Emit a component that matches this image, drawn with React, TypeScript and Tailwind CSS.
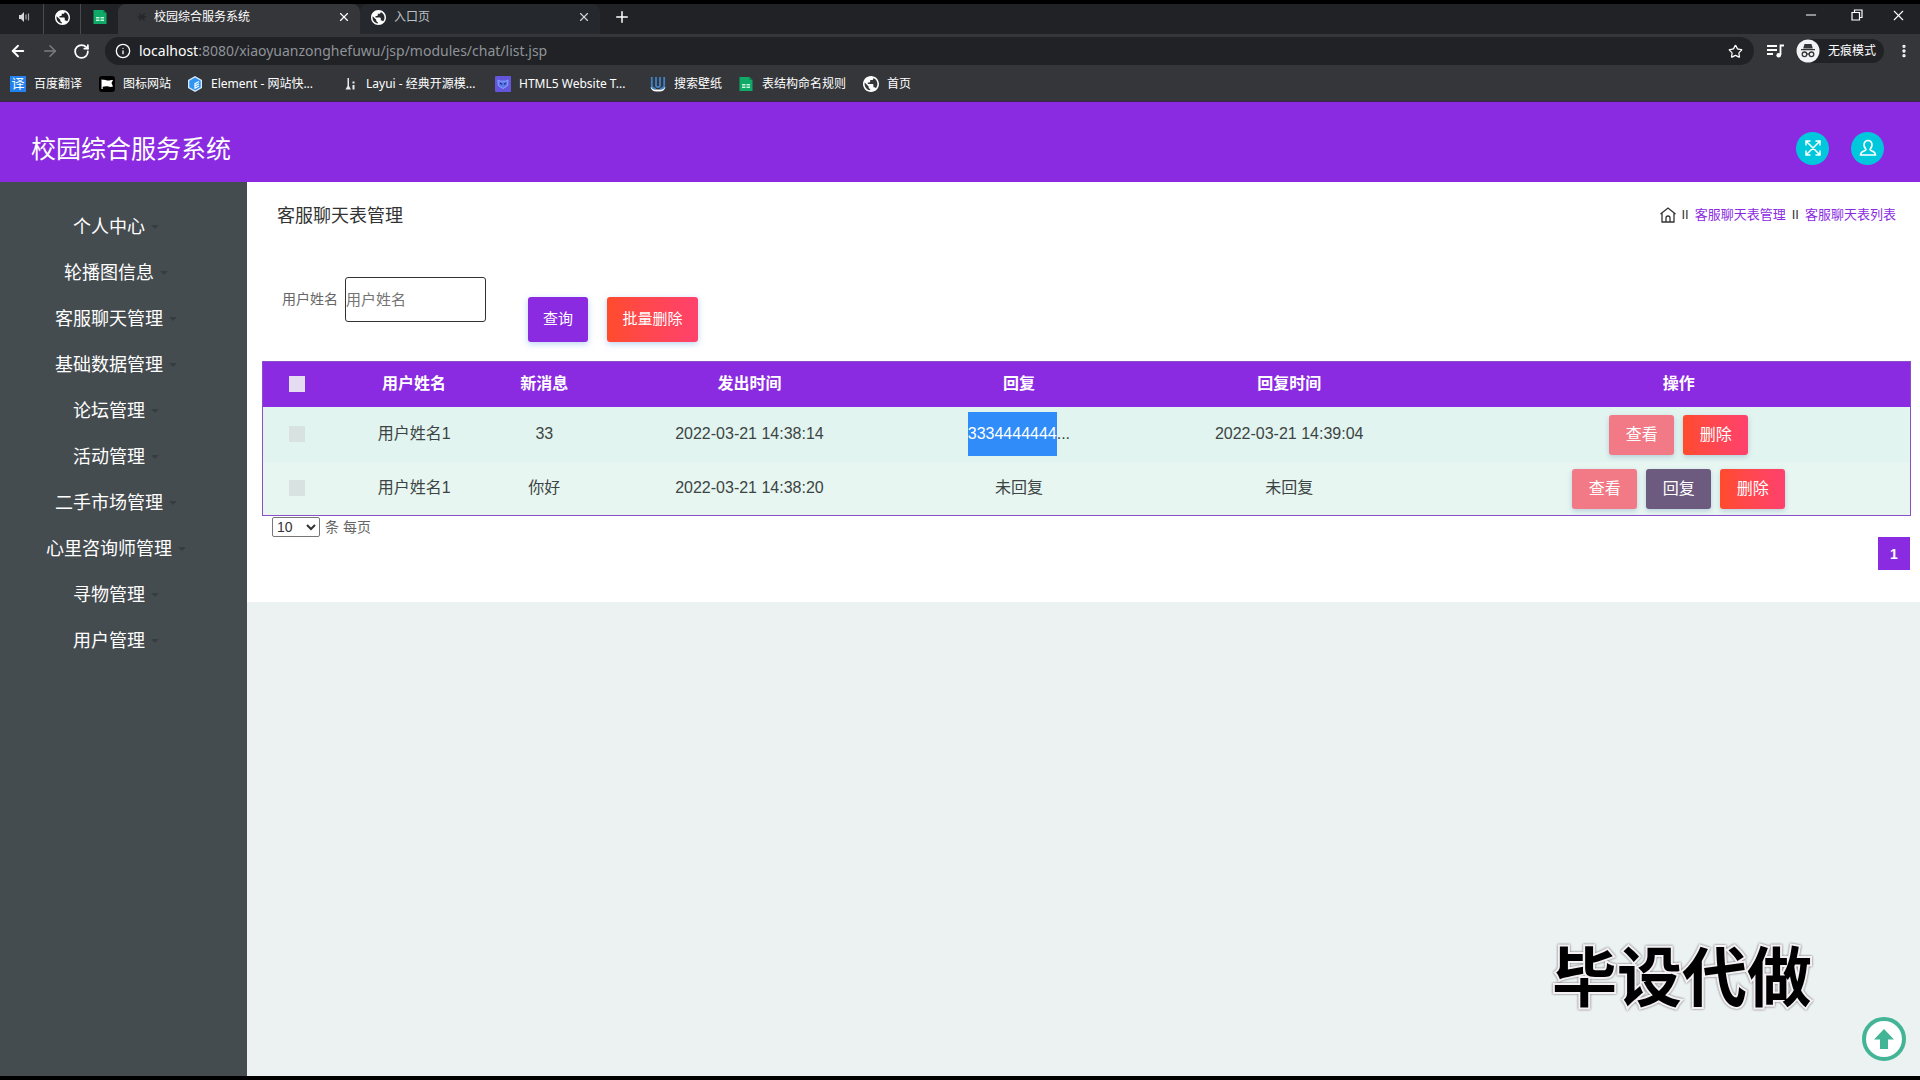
import React from "react";
import { ArrowLeft, ArrowRight, RotateCw, Info, Star, X, Plus, Minus, MoreVertical } from "lucide-react";

function Globe({ className }: { className: string }) {
  return (
    <svg viewBox="2 2 20 20" className={className} aria-hidden="true">
      <path fill="#fff" d="M12 2C6.48 2 2 6.48 2 12s4.48 10 10 10 10-4.48 10-10S17.52 2 12 2zm-1 17.93c-3.95-.49-7-3.85-7-7.93 0-.62.08-1.21.21-1.79L9 15v1c0 1.1.9 2 2 2v1.93zm6.9-2.54c-.26-.81-1-1.39-1.900-1.39h-1v-3c0-.55-.45-1-1-1H8v-2h2c.55 0 1-.45 1-1V7h2c1.100 0 2-.9 2-2v-.41c2.930 1.190 5 4.060 5 7.410 0 2.080-.8 3.970-2.100 5.390z" />
    </svg>
  );
}

function Sheet({ className }: { className: string }) {
  return (
    <svg viewBox="0 0 16 16" className={className} aria-hidden="true">
      <path d="M1.500 1h10l3 3v11h-13z" fill="#0fa968" />
      <path d="M11.500 1l3 3h-3z" fill="#0a7d4c" />
      <path d="M4 8h3.500v1.500H4zM8.500 8H12v1.500H8.500zM4 10.500h3.500V12H4zM8.500 10.500H12V12H8.500z" fill="#c9f5df" />
    </svg>
  );
}

const bookmarkIcon = "size-4 shrink-0";
const bookmarks: { name: string; icon: React.ReactNode; width: string }[] = [
  {
    name: "百度翻译",
    width: "w-[89px]",
    icon: (
      <span className="flex size-4 shrink-0 items-center justify-center bg-[#2382f0] text-[13px] leading-none text-white">译</span>
    ),
  },
  {
    name: "图标网站",
    width: "w-[88px]",
    icon: (
      <svg viewBox="0 0 16 16" className={bookmarkIcon} aria-hidden="true">
        <rect width="16" height="16" rx="3" fill="#000" />
        <path d="M2.500 3.500h1.200V4c2-1 4 .8 6 .5 1.200-.1 2-.5 4.300-.5l-1.500 3L14 10.500c-2 .5-3 .5-4.500 0-2-.5-3.500-.5-5.800.3V13H2.500z" fill="#fff" />
      </svg>
    ),
  },
  {
    name: "Element - 网站快...",
    width: "w-[155px]",
    icon: (
      <svg viewBox="0 0 16 16" className={bookmarkIcon} aria-hidden="true">
        <path d="M8 0l7 4v8l-7 4-7-4V4z" fill="#d9ecff" />
        <path d="M8 1.500l5.700 3.200v6.600L8 14.500l-5.700-3.200V4.700z" fill="#2f95f5" />
        <path d="M12 5.500L8 7.700v4.500l4-2.200M8 10l4-2.200" fill="none" stroke="#fff" strokeWidth="1.200" />
      </svg>
    ),
  },
  {
    name: "Layui - 经典开源模...",
    width: "w-[153px]",
    icon: (
      <svg viewBox="0 0 16 16" className={bookmarkIcon} aria-hidden="true">
        <path d="M5.500 2h1.500v8l2 3.500H3.500L5.500 10zM10.500 5.500h2v2h-2zM10.500 9h2v4.500h-2z" fill="#e8eaed" />
      </svg>
    ),
  },
  {
    name: "HTML5 Website T...",
    width: "w-[155px]",
    icon: (
      <svg viewBox="0 0 16 16" className={bookmarkIcon} aria-hidden="true">
        <rect width="16" height="16" rx="1" fill="#6456dc" />
        <path d="M3 4l2.500 1.200h5L13 4l-.3 5.500L8 12.500 3.300 9.500z" fill="#5a7be8" stroke="#86a4ff" />
        <path d="M5 7l2 1.500M11 7L9 8.500" stroke="#2d2a90" strokeWidth="1.300" />
      </svg>
    ),
  },
  {
    name: "搜索壁纸",
    width: "w-[88px]",
    icon: (
      <svg viewBox="0 0 16 16" className={bookmarkIcon} aria-hidden="true">
        <path d="M1.500 11q1 3.500 5 3.500h3q4 0 5-3.500" fill="none" stroke="#fff" strokeWidth="2" />
        <path d="M1.800 1v9q.5 2.500 4 2.800M6 1v8.500q0 1.500 2 1.500t2-1.500V1M14.200 1v9q-.5 2.500-4 2.800" fill="none" stroke="#3f82c8" strokeWidth="1.800" />
      </svg>
    ),
  },
  { name: "表结构命名规则", width: "w-[125px]", icon: <Sheet className={bookmarkIcon} /> },
  { name: "首页", width: "w-[60px]", icon: <Globe className={bookmarkIcon} /> },
];

const windowButton = "flex w-[46px] items-center justify-center";

function Browser() {
  return (
    <header className="bg-[#35363a] text-xs text-white">
      <div className="h-1 bg-black" />
      <div className="flex h-[30px] bg-[#202226]">
        <div className="flex w-[43px] items-center justify-center pb-1 pl-1">
          <svg viewBox="0 0 14 14" className="size-3.5" aria-hidden="true">
            <path d="M2 5h2l3-3v10L4 9H2z" fill="#d5d7da" />
            <path d="M9 4.500v5M11.500 3.500v7" stroke="#a5a8ab" strokeWidth="1.200" />
          </svg>
        </div>
        <div className="flex w-[38px] items-center justify-center border-x border-[#4a4b4f] pb-1">
          <Globe className="size-[15px]" />
        </div>
        <div className="flex w-[37px] items-center justify-center pb-1">
          <Sheet className="size-4" />
        </div>
        <div className="flex w-[242px] items-center rounded-t-lg bg-[#35363a] pb-1 pl-[17px] pr-[9px]">
          <svg viewBox="0 0 16 16" className="mr-[5px] size-3.5" aria-hidden="true">
            <path d="M5 4l6 8M11 4l-6 8M3 8h10" stroke="#26272a" strokeWidth="1.500" />
          </svg>
          <span className="flex-1">校园综合服务系统</span>
          <button aria-label="关闭标签页"><X className="size-3.5" /></button>
        </div>
        <div className="flex w-[240px] items-center rounded-t-lg bg-[#25282c] pb-1 pl-[11px] pr-[9px]">
          <Globe className="mr-2 size-[15px]" />
          <span className="flex-1 text-[#bdc1c6]">入口页</span>
          <button aria-label="关闭标签页"><X className="size-3.5 text-[#d0d3d6]" /></button>
        </div>
        <button className="ml-[13px] pb-1" aria-label="新标签页"><Plus className="size-[18px]" /></button>
        <div className="ml-auto flex pb-2">
          <button className={windowButton} aria-label="最小化"><Minus strokeWidth={1.5} className="size-4" /></button>
          <button className={windowButton} aria-label="还原">
            <svg viewBox="0 0 12 12" className="size-3" fill="none" stroke="#fff" strokeWidth="1.200" aria-hidden="true">
              <path d="M1 3.500h7.500V11H1zM3.500 3.500V1H11v7.500H8.500" />
            </svg>
          </button>
          <button className="flex w-10 items-center justify-center pr-1" aria-label="关闭"><X strokeWidth={1.5} className="size-[17px]" /></button>
        </div>
      </div>
      <div className="flex h-[34px] items-center pl-[9px] pr-2">
        <button aria-label="后退"><ArrowLeft className="size-[18px]" strokeWidth={2.5} /></button>
        <button className="ml-[14px]" aria-label="前进"><ArrowRight className="size-[18px] text-[#7b7d80]" /></button>
        <button className="ml-[14px]" aria-label="刷新"><RotateCw className="size-[17px]" strokeWidth={2.5} /></button>
        <div className="ml-[15px] flex h-7 flex-1 items-center rounded-full bg-[#202226] pl-2.5 pr-[11px]">
          <Info className="mr-2 size-4" />
          <div role="textbox" aria-label="地址" className="flex-1 font-['Noto_Sans',sans-serif] text-sm text-[#8f9398]">
            <span className="text-white">localhost</span>:8080/xiaoyuanzonghefuwu/jsp/modules/chat/list.jsp
          </div>
          <button aria-label="收藏"><Star className="size-[15px]" /></button>
        </div>
        <button className="ml-3" aria-label="媒体控制">
          <svg viewBox="0 0 18 14" className="h-[14px] w-[18px]" aria-hidden="true">
            <path d="M1 2h10M1 6h10M1 10h6M14.500 11V1.500H18" fill="none" stroke="#fff" strokeWidth="1.800" />
            <circle cx="12.700" cy="11.200" r="2.300" fill="#fff" />
          </svg>
        </button>
        <div className="ml-3 flex h-6 items-center gap-2 rounded-full bg-[#202226] pr-2">
          <svg viewBox="0 0 24 24" className="size-6" aria-hidden="true">
            <circle cx="12" cy="12" r="11.500" fill="#f1f3f4" />
            <path d="M8.500 5h7l1.300 4.500H7.200zM5 10h14v1.300H5z" fill="#35363a" />
            <g fill="none" stroke="#35363a" strokeWidth="1.300"><circle cx="8.500" cy="15.300" r="2.300" /><circle cx="15.500" cy="15.300" r="2.300" /><path d="M10.800 15h2.400" /></g>
          </svg>
          <span>无痕模式</span>
        </div>
        <button className="ml-3" aria-label="菜单"><MoreVertical className="size-4" strokeWidth={3} /></button>
      </div>
      <nav className="flex h-[34px] items-center border-b border-[#3c2350] pb-0.5 pl-[10px]">
        {bookmarks.map((b) => (
          <a key={b.name} href="#" className={"flex items-center gap-2 whitespace-nowrap " + b.width}>
            {b.icon}
            {b.name}
          </a>
        ))}
      </nav>
    </header>
  );
}

const menu = ["个人中心", "轮播图信息", "客服聊天管理", "基础数据管理", "论坛管理", "活动管理", "二手市场管理", "心里咨询师管理", "寻物管理", "用户管理"];

const rows = [
  { id: 1, name: "用户姓名1", msg: "33", sent: "2022-03-21 14:38:14", reply: "3334444444", replied: "2022-03-21 14:39:04", open: false },
  { id: 2, name: "用户姓名1", msg: "你好", sent: "2022-03-21 14:38:20", reply: "", replied: "未回复", open: true },
];

const action = "h-10 w-[65px] rounded-[3px] text-base text-white shadow-[0_2px_5px_rgba(120,150,190,0.4)]";
const red = "bg-linear-to-r from-[#ff4b2b] to-[#ff416c]";
const box = "block mx-auto size-4 appearance-none";

export default function App() {
  return (
    <div className="flex min-h-screen flex-col bg-[#ebf2f1] font-['Liberation_Sans','Noto_Sans_CJK_SC',sans-serif]">
      <div className="font-['Noto_Sans','Noto_Sans_CJK_SC',sans-serif]"><Browser /></div>
      <div className="flex h-20 items-center justify-between bg-[#8a2be2] pl-[31px] pr-9 pt-3">
        <h1 className="pt-1 text-[25px] text-white">校园综合服务系统</h1>
        <div className="flex gap-[22px]">
          <button className="flex size-[33px] items-center justify-center rounded-full bg-[#00c8dc]" aria-label="全屏">
            <svg viewBox="0 0 16 16" className="size-4" fill="none" stroke="#fff" strokeWidth="1.500" aria-hidden="true">
              <path d="M1 5.500V1h4.500M10.500 1H15v4.500M15 10.500V15h-4.500M5.500 15H1v-4.500M1.500 1.500l13 13M14.500 1.500l-13 13" />
            </svg>
          </button>
          <button className="flex size-[33px] items-center justify-center rounded-full bg-[#00c8dc]" aria-label="用户">
            <svg viewBox="0 0 18 18" className="size-[18px]" fill="none" stroke="#fff" strokeWidth="1.600" aria-hidden="true">
              <path d="M7 10.500C3.500 6.500 5 1.500 9 1.500s5.500 5 2 9c0 2 5.500 1 5.500 5.500h-15C1.500 11.500 7 12.500 7 10.500z" />
            </svg>
          </button>
        </div>
      </div>
      <div className="flex flex-1">
        <nav className="w-[247px] shrink-0 bg-[#454c50] pr-[15px] pt-[22px]">
          {menu.map((m) => (
            <a key={m} href="#" className="flex h-[46px] items-center justify-center text-lg text-white">
              {m}
              <span className="ml-1.5 h-0 w-2 border-x-4 border-t-4 border-x-transparent border-t-[#363d41]" />
            </a>
          ))}
        </nav>
        <main className="min-w-0 flex-1">
          <section className="h-[420px] bg-white pl-[15px] pr-[9px]">
            <div className="flex h-[68px] items-center justify-between px-[15px]">
              <h2 className="text-lg text-[#333]">客服聊天表管理</h2>
              <div className="flex items-center gap-1.5 pb-0.5 text-[13px] text-[#333]">
                <svg viewBox="0 0 16 16" className="size-4" fill="none" stroke="#333" strokeWidth="1.300" aria-hidden="true">
                  <path d="M.5 7L8 1l7.500 6M2 6v9h12V6M6 15v-4a2 2 0 0 1 4 0v4" />
                </svg>
                <span>II</span>
                <a href="#" className="text-[#8a2be2]">客服聊天表管理</a>
                <span>II</span>
                <a href="#" className="text-[#8a2be2]">客服聊天表列表</a>
              </div>
            </div>
            <form className="flex h-[111px] items-start pl-5 pt-[27px]" onSubmit={(e) => e.preventDefault()}>
              <label htmlFor="username" className="mr-[7px] text-sm leading-[44px] text-[#666]">用户姓名</label>
              <input id="username" placeholder="用户姓名" className="h-[45px] w-[141px] rounded-[3px] border border-[#333] text-[15px] placeholder:text-[#757575]" />
              <button className="ml-[42px] mt-5 h-[45px] w-[60px] rounded-[3px] bg-[#8a2be2] text-[15px] text-white shadow-[0_2px_6px_rgba(120,170,230,0.5)]">查询</button>
              <button type="button" className={"ml-[19px] mt-5 h-[45px] w-[91px] rounded-[3px] text-[15px] text-white shadow-[0_2px_6px_rgba(120,170,230,0.5)] " + red}>批量删除</button>
            </form>
            <table className="w-full table-fixed border-collapse border border-[#8a4fc8] text-center text-base text-[#3c4444]">
              <colgroup>
                <col className="w-[4.2%]" /><col className="w-[10%]" /><col className="w-[5.8%]" /><col className="w-[19.1%]" /><col className="w-[13.6%]" /><col className="w-[19.2%]" /><col className="w-[28.1%]" />
              </colgroup>
              <thead className="bg-[#8a2be2] text-white">
                <tr className="h-[45px]">
                  <th><input type="checkbox" aria-label="全选" className={box + " bg-[#e4dcf0]"} /></th>
                  <th>用户姓名</th><th>新消息</th><th>发出时间</th><th>回复</th><th>回复时间</th><th>操作</th>
                </tr>
              </thead>
              <tbody>
                {rows.map((r) => (
                  <tr key={r.id} className={r.open ? "h-[54px] bg-[#e7f6f1]" : "h-[55px] bg-[#e2f4ef]"}>
                    <td><input type="checkbox" aria-label="选择" className={box + " bg-[#d8e2e0]"} /></td>
                    <td>{r.name}</td>
                    <td>{r.msg}</td>
                    <td>{r.sent}</td>
                    <td>
                      {r.reply ? (
                        <><span className="inline-block bg-[#2f8cf8] leading-[44px] text-white">{r.reply}</span>...</>
                      ) : "未回复"}
                    </td>
                    <td>{r.replied}</td>
                    <td>
                      <div className="flex justify-center gap-[9px] pt-0.5">
                        <button className={action + " bg-[#f27a86]"}>查看</button>
                        {r.open && <button className={action + " bg-[#6c5b7f]"}>回复</button>}
                        <button className={action + " " + red}>删除</button>
                      </div>
                    </td>
                  </tr>
                ))}
              </tbody>
            </table>
            <div className="flex h-[21px] items-center gap-[5px] pl-[10px] text-sm text-[#666]">
              <select aria-label="每页条数" className="h-5 w-12 rounded-[2px] border border-[#767676] bg-white text-sm text-[#333]">
                <option>10</option>
              </select>
              <span>条 每页</span>
            </div>
            <div className="flex justify-end pr-px">
              <button className="h-[33px] w-8 bg-[#8a2be2] text-sm font-bold text-white">1</button>
            </div>
          </section>
        </main>
      </div>
      <div className="h-1 bg-black" />
      <div className="pointer-events-none fixed bottom-[59px] right-[108px] font-['Noto_Sans_CJK_SC',sans-serif] text-[65px] leading-[96px] font-bold text-black [paint-order:stroke] [-webkit-text-stroke:4px_#f4f0f4] drop-shadow-[0_0_1px_#666]">毕设代做</div>
      <button aria-label="返回顶部" className="fixed bottom-[19px] right-3.5 flex size-[44px] items-center justify-center rounded-full border-4 border-[#43b596] bg-white">
        <svg viewBox="0 0 20 20" className="size-5" fill="#43b596" aria-hidden="true"><path d="M10 0l10 10.500h-6V20H6v-9.500H0z" /></svg>
      </button>
    </div>
  );
}
